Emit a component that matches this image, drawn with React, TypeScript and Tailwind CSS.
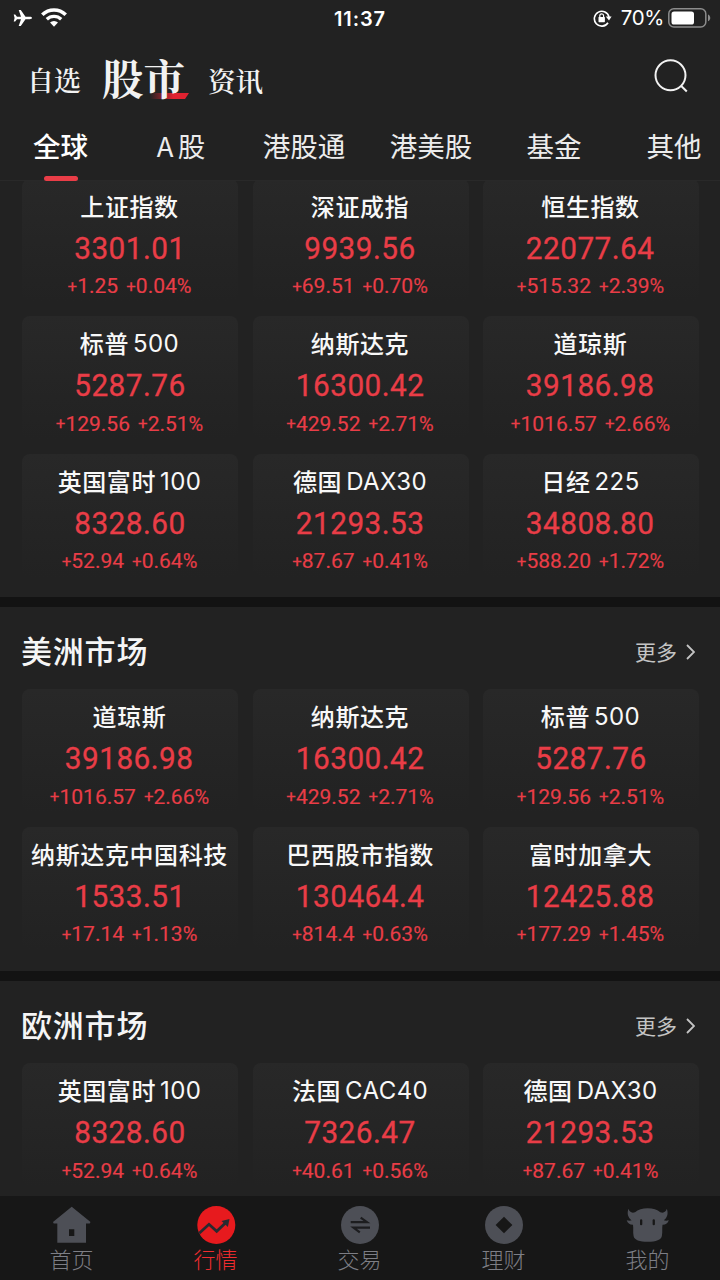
import type { ReactNode } from "react";

type Quote = { name: string; latin?: string; price: string; change: string; percent: string };

const overview: Quote[] = [
  { name: "上证指数", price: "3301.01", change: "1.25", percent: "0.04%" },
  { name: "深证成指", price: "9939.56", change: "69.51", percent: "0.70%" },
  { name: "恒生指数", price: "22077.64", change: "515.32", percent: "2.39%" },
  { name: "标普", latin: "500", price: "5287.76", change: "129.56", percent: "2.51%" },
  { name: "纳斯达克", price: "16300.42", change: "429.52", percent: "2.71%" },
  { name: "道琼斯", price: "39186.98", change: "1016.57", percent: "2.66%" },
  { name: "英国富时", latin: "100", price: "8328.60", change: "52.94", percent: "0.64%" },
  { name: "德国", latin: "DAX30", price: "21293.53", change: "87.67", percent: "0.41%" },
  { name: "日经", latin: "225", price: "34808.80", change: "588.20", percent: "1.72%" },
];

const americas: Quote[] = [
  { name: "道琼斯", price: "39186.98", change: "1016.57", percent: "2.66%" },
  { name: "纳斯达克", price: "16300.42", change: "429.52", percent: "2.71%" },
  { name: "标普", latin: "500", price: "5287.76", change: "129.56", percent: "2.51%" },
  { name: "纳斯达克中国科技", price: "1533.51", change: "17.14", percent: "1.13%" },
  { name: "巴西股市指数", price: "130464.4", change: "814.4", percent: "0.63%" },
  { name: "富时加拿大", price: "12425.88", change: "177.29", percent: "1.45%" },
];

const europe: Quote[] = [
  { name: "英国富时", latin: "100", price: "8328.60", change: "52.94", percent: "0.64%" },
  { name: "法国", latin: "CAC40", price: "7326.47", change: "40.61", percent: "0.56%" },
  { name: "德国", latin: "DAX30", price: "21293.53", change: "87.67", percent: "0.41%" },
];

function Delta({ value }: { value: string }) {
  const pct = value.endsWith("%");
  return (
    <span className="flex items-baseline">
      <span className="mb-px self-center text-[17px]">+</span>
      <span>{pct ? value.slice(0, -1) : value}</span>
      {pct && <span className="text-[20px]">%</span>}
    </span>
  );
}

function Card({ q }: { q: Quote }) {
  return (
    <div className="flex h-[123px] flex-col items-center whitespace-nowrap rounded-lg bg-linear-to-b from-[#282828] to-[#222222] pr-px pt-[9px]">
      <div className="flex h-9 items-center gap-1 text-2xl font-medium tracking-[0.6px] text-[#f8f8f8]">
        <span>{q.name}</span>
        {q.latin && <span className="mt-0.5 font-['Inter'] font-normal tracking-[0.4px]">{q.latin}</span>}
      </div>
      <div className="mb-0.5 flex h-12 scale-x-[0.93] items-center font-['Roboto'] text-[32px] tracking-[0.5px] text-[#e93d47] [-webkit-text-stroke:0.3px_#e93d47]">
        {q.price}
      </div>
      <div className="mt-[-0.5px] flex h-7 items-center gap-2 font-['Roboto'] text-[21px] text-[#e93d47] [-webkit-text-stroke:0.15px_#e93d47]">
        <Delta value={q.change} />
        <Delta value={q.percent} />
      </div>
    </div>
  );
}

function Cards({ items }: { items: Quote[] }) {
  return (
    <div className="grid grid-cols-3 gap-[14.5px] pl-[22px] pr-[21px]">
      {items.map((q) => (
        <Card key={q.name} q={q} />
      ))}
    </div>
  );
}

function Market({ title, items }: { title: string; items: Quote[] }) {
  return (
    <section className="border-t-10 border-[#131313] pb-[21.5px]">
      <div className="flex h-[82px] items-center justify-between pl-[21px] pr-[25px]">
        <h2 className="mt-[4px] text-[31px] font-medium leading-10 tracking-[0.8px] text-[#f5f5f5]">{title}</h2>
        <div className="mt-2 flex items-center gap-[9px] text-[21px] leading-8 text-[#c4c4c4]">
          <span className="mt-[-3px]">更多</span>
          <svg className="h-4 w-[9px]" viewBox="0 0 9 16" fill="none" stroke="currentColor" strokeWidth="1.8">
            <path d="M1 1l7 7-7 7" />
          </svg>
        </div>
      </div>
      <Cards items={items} />
    </section>
  );
}

function StatusBar() {
  return (
    <div className="grid h-9 shrink-0 grid-cols-3 items-center pl-[13px] pr-[9px] pt-px font-['Inter'] text-white">
      <div className="mt-[-2px] flex items-center gap-2">
        <svg className="h-[18px] w-[20px]" viewBox="0 0 20 18" fill="currentColor">
          <path d="M19 9c0 .7-1 1.200-2.200 1.200h-4.300L7.800 17H5.700l2.300-6.800H4l-1.800 2.400H.7L1.600 9 .7 5.400h1.500L4 7.800h4L5.700 1h2.100l4.700 6.800h4.300C18 7.800 19 8.300 19 9z" />
        </svg>
        <svg className="h-[19px] w-[26px]" viewBox="0 0 26 19" fill="none" stroke="currentColor">
          <path d="M1.300 6.800a16.800 16.800 0 0 1 23.400 0" strokeWidth="3.600" />
          <path d="M5.800 11.300a10.300 10.300 0 0 1 14.400 0" strokeWidth="3.300" />
          <path d="M9 14.600a5.800 5.800 0 0 1 8 0L13 18.700z" fill="currentColor" stroke="none" />
        </svg>
      </div>
      <div className="mr-1 text-center text-[20px] font-semibold tracking-[0.9px]">11:37</div>
      <div className="flex items-center justify-end">
        <svg className="mr-[9px] mt-[-1px] h-[18px] w-[19px]" viewBox="0 0 19 18" fill="none" stroke="currentColor" strokeWidth="1.6">
          <path d="M15 13.700a7.400 7.400 0 1 1 1-5.500" />
          <path d="M12.800 7.500h5.800l-2.600 4z" fill="currentColor" stroke="none" />
          <rect x="5.500" y="8" width="6.400" height="5.200" rx=".6" fill="currentColor" stroke="none" />
          <path d="M6.800 8.500V6.700a1.900 1.900 0 0 1 3.800 0v1.800" strokeWidth="1.2" />
        </svg>
        <span className="mr-[4px] text-[20.5px] font-normal tracking-[-0.4px]">70%</span>
        <svg className="mt-[-2px] h-5 w-[43px]" viewBox="0 0 43 20" fill="none">
          <rect x=".8" y=".8" width="37" height="18.200" rx="5" stroke="#8c8c8c" strokeWidth="1.5" />
          <rect x="3.500" y="3.500" width="22.500" height="13" rx="2.600" fill="#fff" />
          <path d="M40 6.500c3 1.300 3 5.500 0 6.800z" fill="#8c8c8c" />
        </svg>
      </div>
    </div>
  );
}

const tabs = [
  { label: "全球", width: "w-[121px]" },
  { label: "A 股", width: "w-[120px]" },
  { label: "港股通", width: "w-[126px]" },
  { label: "港美股", width: "w-[128px]" },
  { label: "基金", width: "w-[118px]" },
  { label: "其他", width: "w-[122px]" },
];

function NavItem({ label, active, children }: { label: string; active?: boolean; children: ReactNode }) {
  return (
    <div className={`flex flex-1 flex-col items-center ${active ? "text-[#f02c2f]" : "text-[#7d7e85]"}`}>
      <svg className="h-[42px] w-[42px] overflow-visible" viewBox="0 0 42 42" fill="#4d4f56">
        {children}
      </svg>
      <span className="mr-px mt-[-3px] text-[22px] font-light leading-[30px]">{label}</span>
    </div>
  );
}

export default function App() {
  return (
    <div className="flex h-[1280px] w-[720px] flex-col overflow-hidden bg-[#222222] font-['Noto_Sans_CJK_SC',sans-serif]">
      <StatusBar />
      <header className="flex h-[81px] shrink-0 items-center pl-[27px] pr-8 font-['Noto_Serif_CJK_SC','Noto_Sans_CJK_SC',serif] text-[#f2f2f2]">
        <span className="mt-1.5 text-[27px] font-semibold leading-9">自选</span>
        <span className="relative ml-[21px] mt-px text-[41.5px] font-bold leading-[54px]">
          <svg className="absolute bottom-[5px] left-[48px] h-[6px] w-[39px]" viewBox="0 0 39 6">
            <defs>
              <linearGradient id="accent">
                <stop offset="0" stopColor="#df2230" stopOpacity="0" />
                <stop offset=".6" stopColor="#df2230" />
              </linearGradient>
            </defs>
            <path d="M0 0h39l-4 6H0z" fill="url(#accent)" />
          </svg>
          <span className="relative">股市</span>
        </span>
        <span className="ml-[23px] mt-1.5 text-[27.5px] font-semibold leading-9">资讯</span>
        <svg className="ml-auto mt-[-2px] h-[34px] w-[34px]" viewBox="0 0 34 34" fill="none" stroke="#f2f2f2" strokeWidth="2">
          <circle cx="16.500" cy="16.300" r="15" />
          <path d="M27 26.800l5.800 5.700" />
        </svg>
      </header>
      <nav className="flex h-16 w-[735px] shrink-0 border-b border-[#292929]">
        {tabs.map((t, i) => (
          <div
            key={t.label}
            className={`${t.width} flex shrink-0 flex-col items-center justify-between pt-[8px] text-[27.5px] leading-10 [word-spacing:-2px] ${i === 0 ? "font-medium text-white" : "text-[#ececec]"}`}
          >
            {t.label}
            {i === 0 && <span className="mb-[-1px] h-[5px] w-[34px] rounded-full bg-[#e93d47]" />}
          </div>
        ))}
      </nav>
      <main className="min-h-0 flex-1 overflow-hidden">
        <div className="mt-[-2.5px] pb-[20.5px]">
          <Cards items={overview} />
        </div>
        <Market title="美洲市场" items={americas} />
        <Market title="欧洲市场" items={europe} />
      </main>
      <footer className="flex h-[84px] shrink-0 bg-[#171717] pt-2">
        <NavItem label="首页">
          <path fillRule="evenodd" d="M20.700 2.700L39.500 18l-.8 1.500H35v19.200H6.300V19.500H2.700L2 18zM18 25.300V32h5.300v-6.700z" />
        </NavItem>
        <NavItem label="行情" active>
          <circle cx="21.300" cy="21" r="19" fill="#e71a1e" />
          <path d="M4.200 29.300l9.800-9 7.700 7L31 18.400" fill="none" stroke="#292a30" strokeWidth="2.8" />
          <path d="M34.500 15l-8 1.900 6.400 6z" fill="#292a30" />
        </NavItem>
        <NavItem label="交易">
          <circle cx="21" cy="21" r="19" />
          <g fill="none" stroke="#1d1d1f" strokeWidth="2.2">
            <path d="M11.700 18.200H28l-6.300-4.600" />
            <path d="M31 23.600H14.500l6.300 4.700" />
          </g>
        </NavItem>
        <NavItem label="理财">
          <circle cx="21" cy="21" r="19" />
          <path d="M21 12.700l8.400 8.300-8.400 8.300-8.400-8.300z" fill="#171717" />
        </NavItem>
        <NavItem label="我的">
          <path d="M1.500 4.800C2.500 8 4.500 9.300 8 8.300 11 5.500 15.500 4.300 20.700 4.300s9.700 1.200 12.600 4c3.500 1 5.500-.3 6.500-3.500 1.700 4.500.7 8.700-3 11.500 1.500.5 3 .5 5 0-1 3-3 4.600-6.300 4.500-.6 3.500.2 7-.6 11-.5 4-6 6-14.100 6S7.100 36 6.600 32c-.8-4.200 0-7.700-.6-11.200-3.300.1-5.300-1.500-6.300-4.500 2 .5 3.500.5 5 0-3.900-2.800-4.900-7-3.200-11.500z" />
          <rect x="13" y="15.300" width="2.300" height="6" rx="1.100" fill="#171717" />
          <rect x="25.600" y="15.300" width="2.300" height="6" rx="1.100" fill="#171717" />
        </NavItem>
      </footer>
    </div>
  );
}
